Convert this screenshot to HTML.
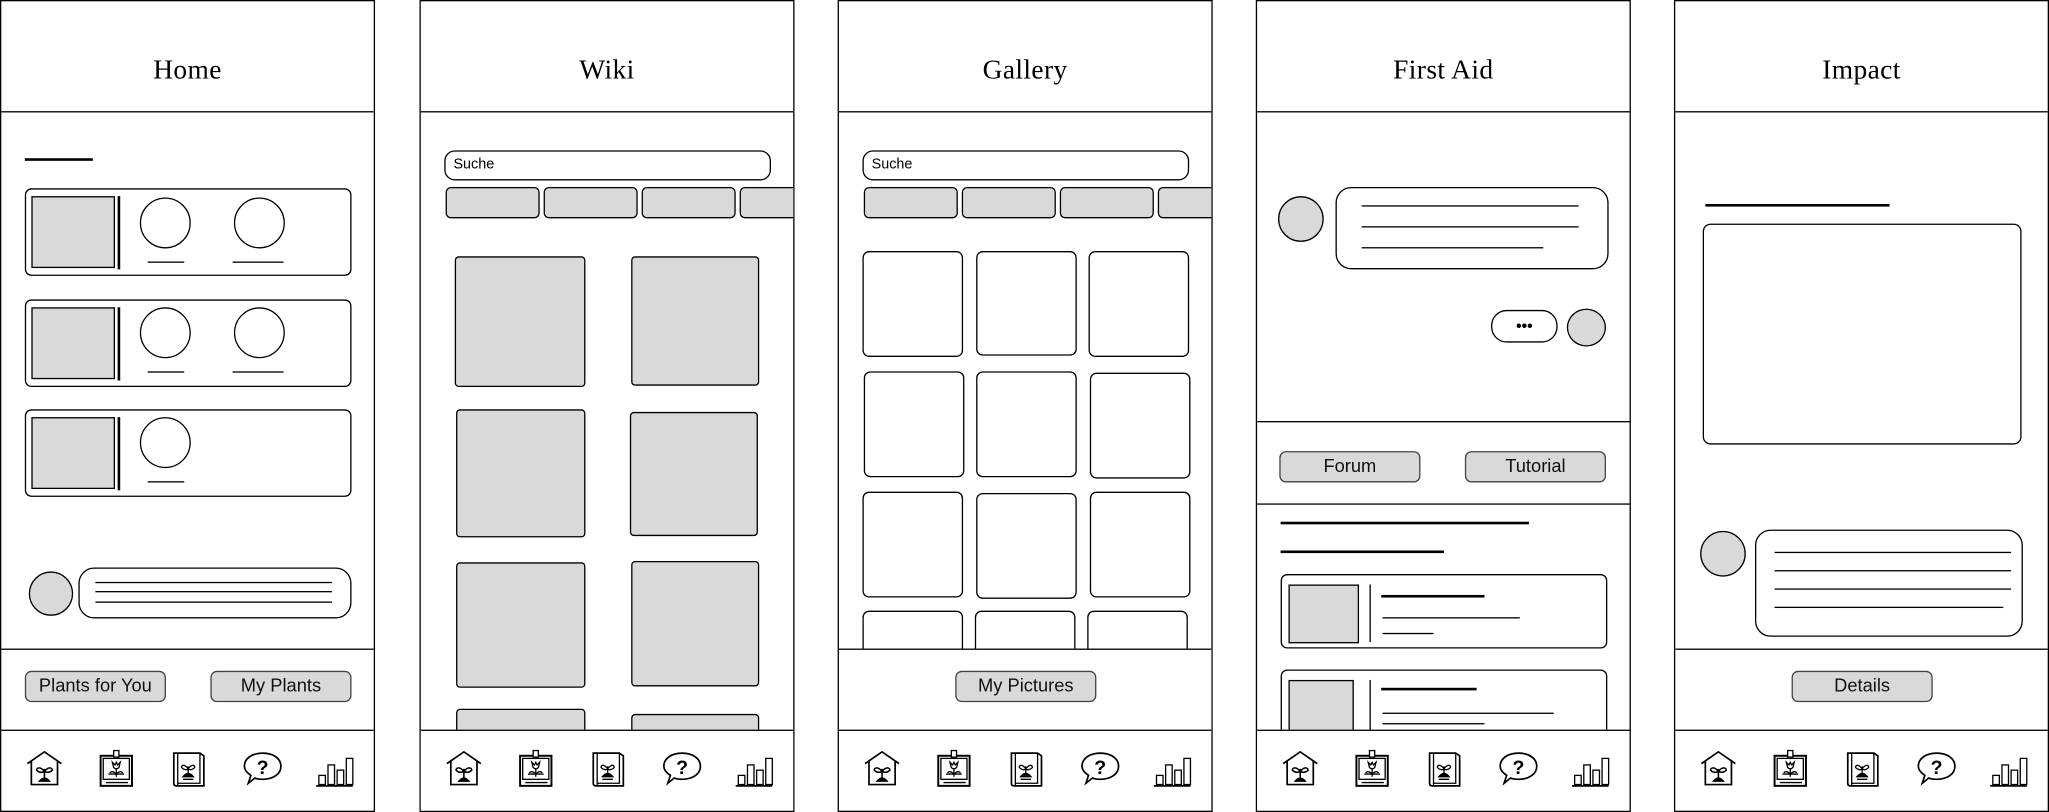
<!DOCTYPE html>
<html><head><meta charset="utf-8"><style>
html,body{margin:0;padding:0;background:#fff;width:2049px;height:812px;overflow:hidden}
#w{position:absolute;left:0;top:0;width:1568px;height:621px;transform:scale(1.30676,1.30757);transform-origin:0 0}
.p{position:absolute;top:0;width:285px;height:619px;border:1px solid #000;overflow:hidden;background:#fff}
.p div,.p svg{position:absolute;box-sizing:border-box}
.t{left:0;width:285px;top:40px;text-align:center;font:21px "Liberation Serif",serif;letter-spacing:.3px}
.hl{left:0;width:285px;height:1px;background:#000}
.b{border:1px solid #000;border-radius:5px;background:#fff}
.g{background:#d9d9d9;border:1px solid #000}
.btn{background:#d9d9d9;border:1px solid #444;border-radius:5px;font:14px "Liberation Sans",sans-serif;text-align:center;line-height:21px;color:#111}
.c{border:1px solid #000;border-radius:50%}
.l{height:1px;background:#000}
.L{height:2px;background:#000}
.s{border:1px solid #000;border-radius:8px;font:11px "Liberation Sans",sans-serif;padding-left:6px;line-height:20px}
.ch{background:#d9d9d9;border:1px solid #000;border-radius:4px;height:24px;width:72px;top:142px}
</style></head><body><div id="w">

<svg width="0" height="0" style="position:absolute"><defs>
<g id="home"><path d="M2 11 L15 2 L28 11 M5 9 V27 H25 V9" fill="none" stroke="#000" stroke-width="1.3"/><path d="M15 22 V15 M15 17 C12 13 9 14 9 16 C11 18 13 18 15 17 M15 17 C18 13 21 14 21 16 C19 18 17 18 15 17" fill="none" stroke="#000" stroke-width="1.2"/><path d="M10 25 Q15 18 20 25 Z" fill="#000"/></g>
<g id="frame"><rect x="3" y="5" width="24" height="23" fill="none" stroke="#000" stroke-width="1.5"/><rect x="5" y="7" width="20" height="16" fill="none" stroke="#000"/><rect x="13" y="1" width="4" height="5" fill="#fff" stroke="#000"/><path d="M12 10 L13 14 Q15 16 17 14 L18 10 L16 12 L15 10 L14 12 Z M15 15 V21 M9 19 H21 M15 19 Q12 16 10 18 M15 19 Q18 16 20 18" fill="none" stroke="#000"/><path d="M7 25.5 H24" stroke="#000"/></g>
<g id="book"><path d="M4 3 H24 L27 5 V28 H6 Q4 28 4 26 Z" fill="none" stroke="#000" stroke-width="1.3"/><path d="M7 3 V28 M24 3 V26 H7" fill="none" stroke="#000"/><path d="M15 19 V13 M15 15 C12 11 10 12 10 14 C12 16 14 16 15 15 M15 15 C18 11 20 12 20 14 C18 16 16 16 15 15" fill="none" stroke="#000"/><path d="M11 21 Q15 16 19 21 Z M11 23 H19" fill="#000" stroke="#000"/></g>
<g id="help"><path d="M15 3 C23 3 29 7 29 13 C29 19 23 23 15 23 C13 23 11 23 9 22 L4 26 L6 20 C3 18 1 16 1 13 C1 7 7 3 15 3 Z" fill="none" stroke="#000" stroke-width="1.3"/><text x="15" y="19" text-anchor="middle" font-family="Liberation Sans" font-weight="bold" font-size="15">?</text></g>
<g id="chart"><path d="M1 28 H29" stroke="#000" stroke-width="1.3"/><rect x="3" y="20" width="5" height="7" fill="none" stroke="#000"/><rect x="10" y="12" width="5" height="15" fill="none" stroke="#000"/><rect x="17" y="16" width="5" height="11" fill="none" stroke="#000"/><rect x="24" y="7" width="5" height="20" fill="none" stroke="#000"/></g>
</defs></svg>

<!-- HOME -->
<div class="p" style="left:0">
<div class="t">Home</div><div class="hl" style="top:84px"></div>
<div class="L" style="left:18px;top:120px;width:52px"></div>
<div class="b" style="left:18px;top:143px;width:250px;height:67px"></div>
<div class="g" style="left:23px;top:149px;width:64px;height:55px"></div><div class="L" style="left:89px;top:149px;width:2px;height:56px"></div>
<div class="c" style="left:106px;top:150px;width:39px;height:39px"></div><div class="l" style="left:112px;top:199px;width:28px"></div>
<div class="c" style="left:178px;top:150px;width:39px;height:39px"></div><div class="l" style="left:177px;top:199px;width:39px"></div>
<div class="b" style="left:18px;top:228px;width:250px;height:67px"></div>
<div class="g" style="left:23px;top:234px;width:64px;height:55px"></div><div class="L" style="left:89px;top:234px;width:2px;height:56px"></div>
<div class="c" style="left:106px;top:234px;width:39px;height:39px"></div><div class="l" style="left:112px;top:283px;width:28px"></div>
<div class="c" style="left:178px;top:234px;width:39px;height:39px"></div><div class="l" style="left:177px;top:283px;width:39px"></div>
<div class="b" style="left:18px;top:312px;width:250px;height:67px"></div>
<div class="g" style="left:23px;top:318px;width:64px;height:55px"></div><div class="L" style="left:89px;top:318px;width:2px;height:56px"></div>
<div class="c" style="left:106px;top:318px;width:39px;height:39px"></div><div class="l" style="left:112px;top:367px;width:28px"></div>
<div class="c g" style="left:21px;top:436px;width:34px;height:34px;border-radius:50%"></div>
<div class="b" style="left:59px;top:433px;width:209px;height:39px;border-radius:12px"></div>
<div class="l" style="left:72px;top:444px;width:181px"></div><div class="l" style="left:72px;top:451px;width:181px"></div><div class="l" style="left:72px;top:459px;width:181px"></div>
<div class="hl" style="top:495px"></div>
<div class="btn" style="left:18px;top:512px;width:108px;height:24px">Plants for You</div>
<div class="btn" style="left:160px;top:512px;width:108px;height:24px">My Plants</div>
<div class="hl" style="top:557px"></div>
<svg style="left:18px;top:572px" width="30" height="30"><use href="#home"/></svg>
<svg style="left:73px;top:572px" width="30" height="30"><use href="#frame"/></svg>
<svg style="left:128px;top:572px" width="30" height="30"><use href="#book"/></svg>
<svg style="left:185px;top:572px" width="30" height="30"><use href="#help"/></svg>
<svg style="left:240px;top:572px" width="30" height="30"><use href="#chart"/></svg>
</div>

<!-- WIKI -->
<div class="p" style="left:321px">
<div class="t">Wiki</div><div class="hl" style="top:84px"></div>
<div class="s" style="left:18px;top:114px;width:250px;height:23px">Suche</div>
<div class="ch" style="left:19px"></div><div class="ch" style="left:94px"></div><div class="ch" style="left:169px"></div><div class="ch" style="left:244px"></div>
<div class="g" style="left:26px;top:195px;width:100px;height:100px;border-radius:3px"></div>
<div class="g" style="left:161px;top:195px;width:98px;height:99px;border-radius:3px"></div>
<div class="g" style="left:27px;top:312px;width:99px;height:98px;border-radius:3px"></div>
<div class="g" style="left:160px;top:314px;width:98px;height:95px;border-radius:3px"></div>
<div class="g" style="left:27px;top:429px;width:99px;height:96px;border-radius:3px"></div>
<div class="g" style="left:161px;top:428px;width:98px;height:96px;border-radius:3px"></div>
<div class="g" style="left:27px;top:541px;width:99px;height:40px;border-radius:3px"></div>
<div class="g" style="left:161px;top:545px;width:98px;height:40px;border-radius:3px"></div>
<div class="hl" style="top:557px;background:#fff;height:62px;border-top:1px solid #000"></div>
<svg style="left:18px;top:572px" width="30" height="30"><use href="#home"/></svg>
<svg style="left:73px;top:572px" width="30" height="30"><use href="#frame"/></svg>
<svg style="left:128px;top:572px" width="30" height="30"><use href="#book"/></svg>
<svg style="left:185px;top:572px" width="30" height="30"><use href="#help"/></svg>
<svg style="left:240px;top:572px" width="30" height="30"><use href="#chart"/></svg>
</div>

<!-- GALLERY -->
<div class="p" style="left:641px">
<div class="t">Gallery</div><div class="hl" style="top:84px"></div>
<div class="s" style="left:18px;top:114px;width:250px;height:23px">Suche</div>
<div class="ch" style="left:19px"></div><div class="ch" style="left:94px"></div><div class="ch" style="left:169px"></div><div class="ch" style="left:244px"></div>
<div class="b" style="left:18px;top:191px;width:77px;height:81px"></div><div class="b" style="left:105px;top:191px;width:77px;height:80px"></div><div class="b" style="left:191px;top:191px;width:77px;height:81px"></div>
<div class="b" style="left:19px;top:283px;width:77px;height:81px"></div><div class="b" style="left:105px;top:283px;width:77px;height:81px"></div><div class="b" style="left:192px;top:284px;width:77px;height:81px"></div>
<div class="b" style="left:18px;top:375px;width:77px;height:81px"></div><div class="b" style="left:105px;top:376px;width:77px;height:81px"></div><div class="b" style="left:192px;top:375px;width:77px;height:81px"></div>
<div class="b" style="left:18px;top:466px;width:77px;height:60px"></div><div class="b" style="left:104px;top:466px;width:77px;height:60px"></div><div class="b" style="left:190px;top:466px;width:77px;height:60px"></div>
<div class="hl" style="top:495px;height:63px;background:#fff;border-top:1px solid #000"></div>
<div class="btn" style="left:89px;top:512px;width:108px;height:24px">My Pictures</div>
<div class="hl" style="top:557px"></div>
<svg style="left:18px;top:572px" width="30" height="30"><use href="#home"/></svg>
<svg style="left:73px;top:572px" width="30" height="30"><use href="#frame"/></svg>
<svg style="left:128px;top:572px" width="30" height="30"><use href="#book"/></svg>
<svg style="left:185px;top:572px" width="30" height="30"><use href="#help"/></svg>
<svg style="left:240px;top:572px" width="30" height="30"><use href="#chart"/></svg>
</div>

<!-- FIRST AID -->
<div class="p" style="left:961px">
<div class="t">First Aid</div><div class="hl" style="top:84px"></div>
<div class="c g" style="left:16px;top:149px;width:35px;height:35px;border-radius:50%"></div>
<div class="b" style="left:60px;top:142px;width:209px;height:63px;border-radius:12px"></div>
<div class="l" style="left:80px;top:156px;width:166px"></div><div class="l" style="left:80px;top:172px;width:166px"></div><div class="l" style="left:80px;top:188px;width:139px"></div>
<div class="b" style="left:179px;top:236px;width:51px;height:25px;border-radius:12px;text-align:center;font:bold 12px 'Liberation Sans',sans-serif;line-height:22px">•••</div>
<div class="c g" style="left:237px;top:235px;width:30px;height:29px;border-radius:50%"></div>
<div class="hl" style="top:321px"></div>
<div class="btn" style="left:17px;top:344px;width:108px;height:24px">Forum</div>
<div class="btn" style="left:159px;top:344px;width:108px;height:24px">Tutorial</div>
<div class="hl" style="top:384px"></div>
<div class="L" style="left:18px;top:398px;width:190px"></div>
<div class="L" style="left:18px;top:420px;width:125px"></div>
<div class="b" style="left:18px;top:438px;width:250px;height:57px"></div>
<div class="g" style="left:24px;top:446px;width:54px;height:45px"></div><div class="l" style="left:86px;top:446px;width:1px;height:44px"></div>
<div class="L" style="left:95px;top:454px;width:79px"></div><div class="l" style="left:96px;top:471px;width:105px"></div><div class="l" style="left:96px;top:483px;width:39px"></div>
<div class="b" style="left:18px;top:511px;width:250px;height:60px"></div>
<div class="g" style="left:24px;top:519px;width:50px;height:45px"></div><div class="l" style="left:86px;top:519px;width:1px;height:44px"></div>
<div class="L" style="left:95px;top:525px;width:73px"></div><div class="l" style="left:96px;top:544px;width:131px"></div><div class="l" style="left:96px;top:552px;width:78px"></div>
<div class="hl" style="top:557px;height:62px;background:#fff;border-top:1px solid #000"></div>
<svg style="left:18px;top:572px" width="30" height="30"><use href="#home"/></svg>
<svg style="left:73px;top:572px" width="30" height="30"><use href="#frame"/></svg>
<svg style="left:128px;top:572px" width="30" height="30"><use href="#book"/></svg>
<svg style="left:185px;top:572px" width="30" height="30"><use href="#help"/></svg>
<svg style="left:240px;top:572px" width="30" height="30"><use href="#chart"/></svg>
</div>

<!-- IMPACT -->
<div class="p" style="left:1281px">
<div class="t">Impact</div><div class="hl" style="top:84px"></div>
<div class="L" style="left:23px;top:155px;width:141px"></div>
<div class="b" style="left:21px;top:170px;width:244px;height:169px;border-radius:6px"></div>
<div class="c g" style="left:19px;top:405px;width:35px;height:35px;border-radius:50%"></div>
<div class="b" style="left:61px;top:404px;width:205px;height:82px;border-radius:12px"></div>
<div class="l" style="left:76px;top:421px;width:181px"></div><div class="l" style="left:76px;top:435px;width:181px"></div><div class="l" style="left:76px;top:449px;width:181px"></div><div class="l" style="left:76px;top:463px;width:175px"></div>
<div class="hl" style="top:495px"></div>
<div class="btn" style="left:89px;top:512px;width:108px;height:24px">Details</div>
<div class="hl" style="top:557px"></div>
<svg style="left:18px;top:572px" width="30" height="30"><use href="#home"/></svg>
<svg style="left:73px;top:572px" width="30" height="30"><use href="#frame"/></svg>
<svg style="left:128px;top:572px" width="30" height="30"><use href="#book"/></svg>
<svg style="left:185px;top:572px" width="30" height="30"><use href="#help"/></svg>
<svg style="left:240px;top:572px" width="30" height="30"><use href="#chart"/></svg>
</div>

</div></body></html>
